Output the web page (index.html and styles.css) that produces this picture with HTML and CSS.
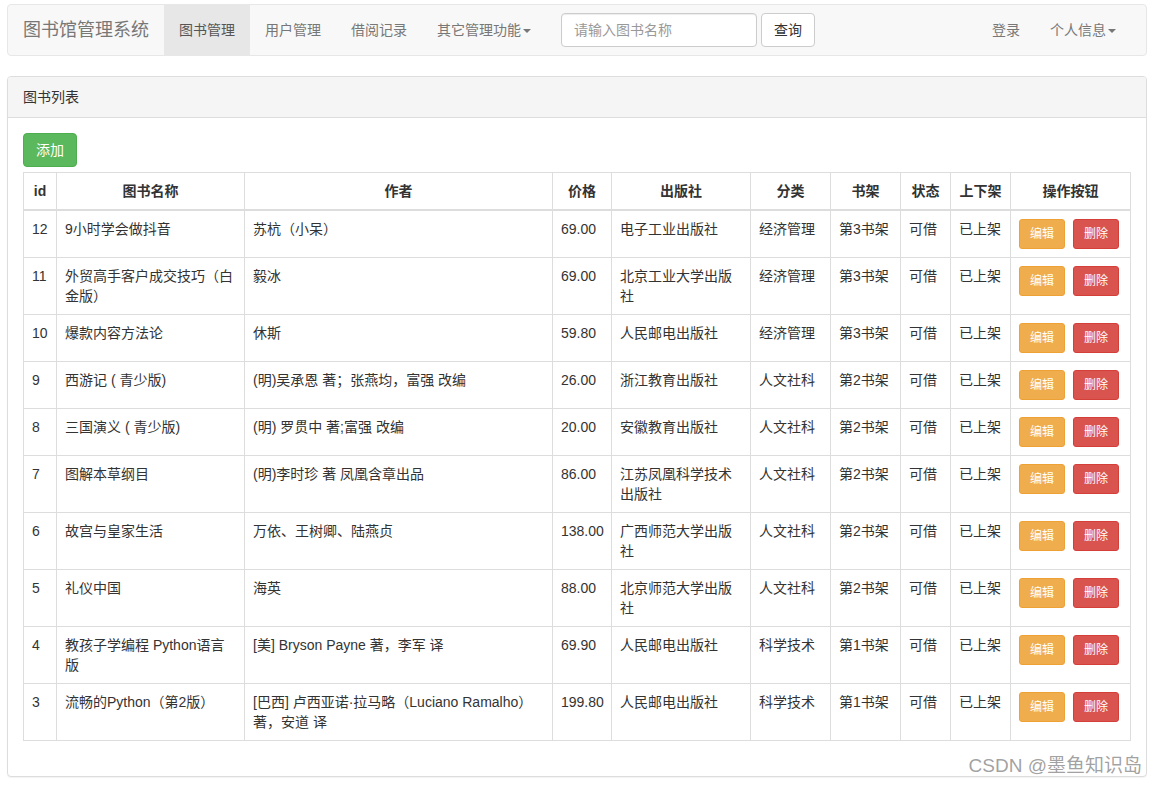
FILE: index.html
```html
<!DOCTYPE html>
<html lang="zh-CN">
<head>
<meta charset="utf-8">
<title>图书馆管理系统</title>
<link rel="stylesheet" href="styles.css">
</head>
<body>
<div class="page">
  <nav class="navbar">
    <a class="brand" href="#">图书馆管理系统</a>
    <ul class="nav">
      <li class="active"><a href="#">图书管理</a></li>
      <li><a href="#">用户管理</a></li>
      <li><a href="#">借阅记录</a></li>
      <li><a href="#">其它管理功能<span class="caret"></span></a></li>
    </ul>
    <form class="nav-form">
      <input class="form-control" type="text" placeholder="请输入图书名称">
      <button class="btn btn-default" type="button">查询</button>
    </form>
    <ul class="nav nav-right">
      <li><a href="#">登录</a></li>
      <li><a href="#">个人信息<span class="caret"></span></a></li>
    </ul>
  </nav>

  <div class="panel">
    <div class="panel-heading">图书列表</div>
    <div class="panel-body">
      <button class="btn btn-success" type="button">添加</button>
      <table class="table">
        <colgroup>
          <col class="c-id"><col class="c-name"><col class="c-author"><col class="c-price"><col class="c-pub"><col class="c-cat"><col class="c-shelf"><col class="c-status"><col class="c-up"><col class="c-ops">
        </colgroup>
        <thead>
          <tr><th>id</th><th>图书名称</th><th>作者</th><th>价格</th><th>出版社</th><th>分类</th><th>书架</th><th>状态</th><th>上下架</th><th>操作按钮</th></tr>
        </thead>
        <tbody>
          <tr><td>12</td><td>9小时学会做抖音</td><td>苏杭（小呆）</td><td>69.00</td><td>电子工业出版社</td><td>经济管理</td><td>第3书架</td><td>可借</td><td>已上架</td><td><div class="ops"><button class="btn btn-sm btn-warning" type="button">编辑</button><button class="btn btn-sm btn-danger" type="button">删除</button></div></td></tr>
          <tr><td>11</td><td>外贸高手客户成交技巧（白金版）</td><td>毅冰</td><td>69.00</td><td>北京工业大学出版社</td><td>经济管理</td><td>第3书架</td><td>可借</td><td>已上架</td><td><div class="ops"><button class="btn btn-sm btn-warning" type="button">编辑</button><button class="btn btn-sm btn-danger" type="button">删除</button></div></td></tr>
          <tr><td>10</td><td>爆款内容方法论</td><td>休斯</td><td>59.80</td><td>人民邮电出版社</td><td>经济管理</td><td>第3书架</td><td>可借</td><td>已上架</td><td><div class="ops"><button class="btn btn-sm btn-warning" type="button">编辑</button><button class="btn btn-sm btn-danger" type="button">删除</button></div></td></tr>
          <tr><td>9</td><td>西游记 ( 青少版)</td><td>(明)吴承恩 著；张燕均，富强 改编</td><td>26.00</td><td>浙江教育出版社</td><td>人文社科</td><td>第2书架</td><td>可借</td><td>已上架</td><td><div class="ops"><button class="btn btn-sm btn-warning" type="button">编辑</button><button class="btn btn-sm btn-danger" type="button">删除</button></div></td></tr>
          <tr><td>8</td><td>三国演义 ( 青少版)</td><td>(明) 罗贯中 著;富强 改编</td><td>20.00</td><td>安徽教育出版社</td><td>人文社科</td><td>第2书架</td><td>可借</td><td>已上架</td><td><div class="ops"><button class="btn btn-sm btn-warning" type="button">编辑</button><button class="btn btn-sm btn-danger" type="button">删除</button></div></td></tr>
          <tr><td>7</td><td>图解本草纲目</td><td>(明)李时珍 著 凤凰含章出品</td><td>86.00</td><td>江苏凤凰科学技术出版社</td><td>人文社科</td><td>第2书架</td><td>可借</td><td>已上架</td><td><div class="ops"><button class="btn btn-sm btn-warning" type="button">编辑</button><button class="btn btn-sm btn-danger" type="button">删除</button></div></td></tr>
          <tr><td>6</td><td>故宫与皇家生活</td><td>万依、王树卿、陆燕贞</td><td>138.00</td><td>广西师范大学出版社</td><td>人文社科</td><td>第2书架</td><td>可借</td><td>已上架</td><td><div class="ops"><button class="btn btn-sm btn-warning" type="button">编辑</button><button class="btn btn-sm btn-danger" type="button">删除</button></div></td></tr>
          <tr><td>5</td><td>礼仪中国</td><td>海英</td><td>88.00</td><td>北京师范大学出版社</td><td>人文社科</td><td>第2书架</td><td>可借</td><td>已上架</td><td><div class="ops"><button class="btn btn-sm btn-warning" type="button">编辑</button><button class="btn btn-sm btn-danger" type="button">删除</button></div></td></tr>
          <tr><td>4</td><td>教孩子学编程 Python语言版</td><td>[美] Bryson Payne 著，李军 译</td><td>69.90</td><td>人民邮电出版社</td><td>科学技术</td><td>第1书架</td><td>可借</td><td>已上架</td><td><div class="ops"><button class="btn btn-sm btn-warning" type="button">编辑</button><button class="btn btn-sm btn-danger" type="button">删除</button></div></td></tr>
          <tr><td>3</td><td>流畅的Python（第2版）</td><td>[巴西] 卢西亚诺·拉马略（Luciano Ramalho） 著，安道 译</td><td>199.80</td><td>人民邮电出版社</td><td>科学技术</td><td>第1书架</td><td>可借</td><td>已上架</td><td><div class="ops"><button class="btn btn-sm btn-warning" type="button">编辑</button><button class="btn btn-sm btn-danger" type="button">删除</button></div></td></tr>
        </tbody>
      </table>
    </div>
  </div>
  <div class="watermark">CSDN @墨鱼知识岛</div>
</div>
</body>
</html>
```

FILE: styles.css
```css
* { box-sizing: border-box; }
html, body { margin: 0; padding: 0; background: #fff; }
body {
  font-family: "Liberation Sans", Arial, "Noto Sans CJK SC", sans-serif;
  font-size: 14px;
  line-height: 20px;
  color: #333;
}
.page {
  position: relative;
  padding: 4px 9px 0 7px;
  height: 785px;
  overflow: hidden;
}
a { text-decoration: none; }

/* navbar */
.navbar {
  display: flex;
  align-items: flex-start;
  height: 52px;
  background: #f8f8f8;
  border: 1px solid #e7e7e7;
  border-radius: 4px;
  padding-right: 15px;
  margin-bottom: 20px;
}
.brand {
  display: block;
  padding: 15px;
  font-size: 18px;
  line-height: 20px;
  height: 50px;
  color: #777;
}
.nav {
  display: flex;
  list-style: none;
  margin: 0;
  padding: 0;
}
.nav li a {
  display: block;
  padding: 15px;
  line-height: 20px;
  color: #777;
}
.nav li.active a {
  background: #e7e7e7;
  color: #555;
}
.caret {
  display: inline-block;
  width: 0;
  height: 0;
  margin-left: 2px;
  vertical-align: middle;
  border-top: 4px solid;
  border-right: 4px solid transparent;
  border-left: 4px solid transparent;
}
.nav-right { margin-left: auto; }
.nav-form {
  display: flex;
  gap: 4px;
  padding: 8px 15px;
  margin: 0;
}
.form-control {
  width: 196px;
  height: 34px;
  padding: 6px 12px;
  font: inherit;
  font-size: 14px;
  line-height: 20px;
  color: #555;
  background: #fff;
  border: 1px solid #ccc;
  border-radius: 4px;
  box-shadow: inset 0 1px 1px rgba(0,0,0,.075);
}
.form-control::placeholder { color: #999; }

/* buttons */
.btn {
  display: inline-block;
  padding: 6px 12px;
  font-family: inherit;
  font-size: 14px;
  line-height: 20px;
  border: 1px solid transparent;
  border-radius: 4px;
  cursor: pointer;
  white-space: nowrap;
}
.btn-default { color: #333; background: #fff; border-color: #ccc; }
.btn-success { color: #fff; background: #5cb85c; border-color: #4cae4c; }
.btn-warning { color: #fff; background: #f0ad4e; border-color: #eea236; }
.btn-danger { color: #fff; background: #d9534f; border-color: #d43f3a; }
.btn-sm {
  padding: 5px 10px;
  font-size: 12px;
  line-height: 18px;
  border-radius: 3px;
}
.ops { display: flex; gap: 8px; }

/* panel */
.panel {
  border: 1px solid #ddd;
  border-radius: 4px;
  background: #fff;
  box-shadow: 0 1px 1px rgba(0,0,0,.05);
}
.panel-heading {
  padding: 10px 15px;
  background: #f5f5f5;
  border-bottom: 1px solid #ddd;
  border-radius: 3px 3px 0 0;
  color: #333;
}
.panel-body { padding: 15px; }

/* table */
.table {
  width: 1107px;
  margin-top: 5px;
  margin-bottom: 20px;
  border-collapse: collapse;
  border-spacing: 0;
  table-layout: fixed;
  border: 1px solid #ddd;
}
.table th, .table td {
  padding: 8px;
  line-height: 20px;
  border: 1px solid #ddd;
  vertical-align: top;
  text-align: left;
}
.table th {
  text-align: center;
  font-weight: bold;
  vertical-align: bottom;
  border-bottom: 2px solid #ddd;
}
.c-id { width: 33px; }
.c-name { width: 188px; }
.c-author { width: 308px; }
.c-price { width: 59px; }
.c-pub { width: 139px; }
.c-cat { width: 80px; }
.c-shelf { width: 70px; }
.c-status { width: 50px; }
.c-up { width: 60px; }
.c-ops { width: 120px; }

.watermark {
  position: absolute;
  right: 14px;
  bottom: 7px;
  font-size: 19px;
  line-height: 24px;
  color: rgba(120,120,120,.7);
  text-shadow: 0 0 2px #fff;
  font-family: "Liberation Sans", Arial, "Noto Sans CJK SC", sans-serif;
}
```
